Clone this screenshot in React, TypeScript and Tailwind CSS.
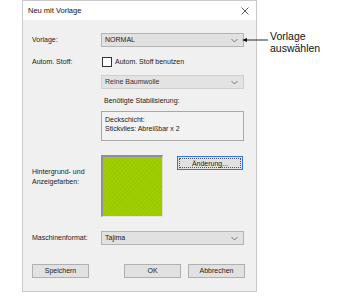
import type { ReactNode } from 'react';

const font = { fontFamily: '"Liberation Sans", Arial, sans-serif' };

function Chevron() {
  return (
    <svg width="7" height="5" viewBox="0 0 7 5" className="shrink-0">
      <path d="M0.5 1 L3.5 4 L6.5 1" fill="none" stroke="#6b6b6b" strokeWidth="0.9" />
    </svg>
  );
}

function Combo({ value, disabled }: { value: string; disabled?: boolean }) {
  return (
    <div
      className={`flex h-[14px] w-[143px] items-center justify-between border pl-[3px] pr-[5px] text-[7px] ${
        disabled ? 'border-[#cfcfcf] bg-[#e3e3e3] text-[#333]' : 'border-[#b4b4b4] bg-[#e1e1e1] text-[#1a1a1a]'
      }`}
    >
      <span>{value}</span>
      <Chevron />
    </div>
  );
}

function Button({ children, focused, className = '' }: { children: ReactNode; focused?: boolean; className?: string }) {
  return (
    <div
      className={`flex h-[14px] items-center justify-center border text-[7px] text-[#1a1a1a] ${
        focused ? 'border-[#2a7ad6] bg-[#e1e1e1] p-[1px]' : 'border-[#b0b0b0] bg-[#e1e1e1]'
      } ${className}`}
    >
      {focused ? (
        <div className="flex h-full w-full items-center justify-center border border-dotted border-[#555] leading-none">
          {children}
        </div>
      ) : (
        children
      )}
    </div>
  );
}

function Row({ label, children, className = '' }: { label?: ReactNode; children: ReactNode; className?: string }) {
  return (
    <div className={`flex items-center ${className}`}>
      <div className="w-[69px] shrink-0 text-[7px] text-[#1a1a1a]">{label}</div>
      {children}
    </div>
  );
}

export default function App() {
  return (
    <div className="flex h-[307px] w-[349px] items-start bg-white pl-[22px]" style={font}>
      <div className="flex h-[292px] w-[235px] flex-col border border-[#c9c9c9] bg-[#f0f0f0]">
        {/* title bar */}
        <div className="flex h-[19px] shrink-0 items-center justify-between bg-white pl-[5px] pr-[7px]">
          <span className="text-[7.5px] text-[#111]">Neu mit Vorlage</span>
          <svg width="8" height="8" viewBox="0 0 8 8">
            <path d="M0.5 0.5 L7.5 7.5 M7.5 0.5 L0.5 7.5" stroke="#333" strokeWidth="0.8" />
          </svg>
        </div>

        <div className="flex flex-col pl-[9px]">
          <Row label="Vorlage:" className="mt-[13px]">
            <Combo value="NORMAL" />
          </Row>

          <Row label="Autom. Stoff:" className="mt-[8px] h-[14px]">
            <div className="flex items-center gap-[3px] pl-[1px] text-[7px] text-[#1a1a1a]">
              <div className="h-[10px] w-[10px] border border-[#333] bg-white" />
              <span>Autom. Stoff benutzen</span>
            </div>
          </Row>

          <Row className="mt-[6px]">
            <Combo value="Reine Baumwolle" disabled />
          </Row>

          <Row className="mt-[7px] h-[10px]">
            <span className="pl-[3px] text-[7px] text-[#1a1a1a]">Benötigte Stabilisierung:</span>
          </Row>

          <Row className="mt-[5px]">
            <div className="h-[30px] w-[143px] border border-[#a8a8a8] bg-[#f2f2f2] px-[3px] pt-[3px] text-[7px] leading-[9px] text-[#1a1a1a]">
              <div>Deckschicht:</div>
              <div>Stickvlies: Abreißbar x 2</div>
            </div>
          </Row>

          <div className="mt-[14px] flex items-start">
            <div className="w-[69px] shrink-0 pt-[12px] pr-[6px] text-[7px] leading-[10px] text-[#1a1a1a]">
              Hintergrund- und Anzeigefarben:
            </div>
            <div className="h-[62px] w-[62px] border-t-2 border-l-2 border-r border-b border-t-[#909090] border-l-[#909090] border-r-[#dcdcdc] border-b-[#e8e8e8] bg-[#9dcc00] bg-[repeating-linear-gradient(135deg,#a0cf02_0px,#a0cf02_1px,#98c700_2px,#9dcc00_3px)]" />
            <Button focused className="ml-[14px] mt-[1px] w-[66px]">
              Änderung...
            </Button>
          </div>

          <Row label="Maschinenformat:" className="mt-[14px]">
            <Combo value="Tajima" />
          </Row>

          <div className="mt-[19px] flex items-center">
            <Button className="w-[57px]">Speichern</Button>
            <Button className="ml-[35px] w-[57px]">OK</Button>
            <Button className="ml-[7px] w-[57px]">Abbrechen</Button>
          </div>
        </div>
      </div>

      {/* annotation */}
      <div className="relative ml-[13px] mt-[30px] text-[10.5px] leading-[12px] text-[#111]">
        <svg width="27" height="6" viewBox="0 0 27 6" className="absolute left-[-28px] top-[7px]">
          <path d="M2 3 L26 3" stroke="#111" strokeWidth="0.9" />
          <path d="M0 3 L5 1 L5 5 Z" fill="#111" />
        </svg>
        <div>Vorlage</div>
        <div>auswählen</div>
      </div>
    </div>
  );
}
